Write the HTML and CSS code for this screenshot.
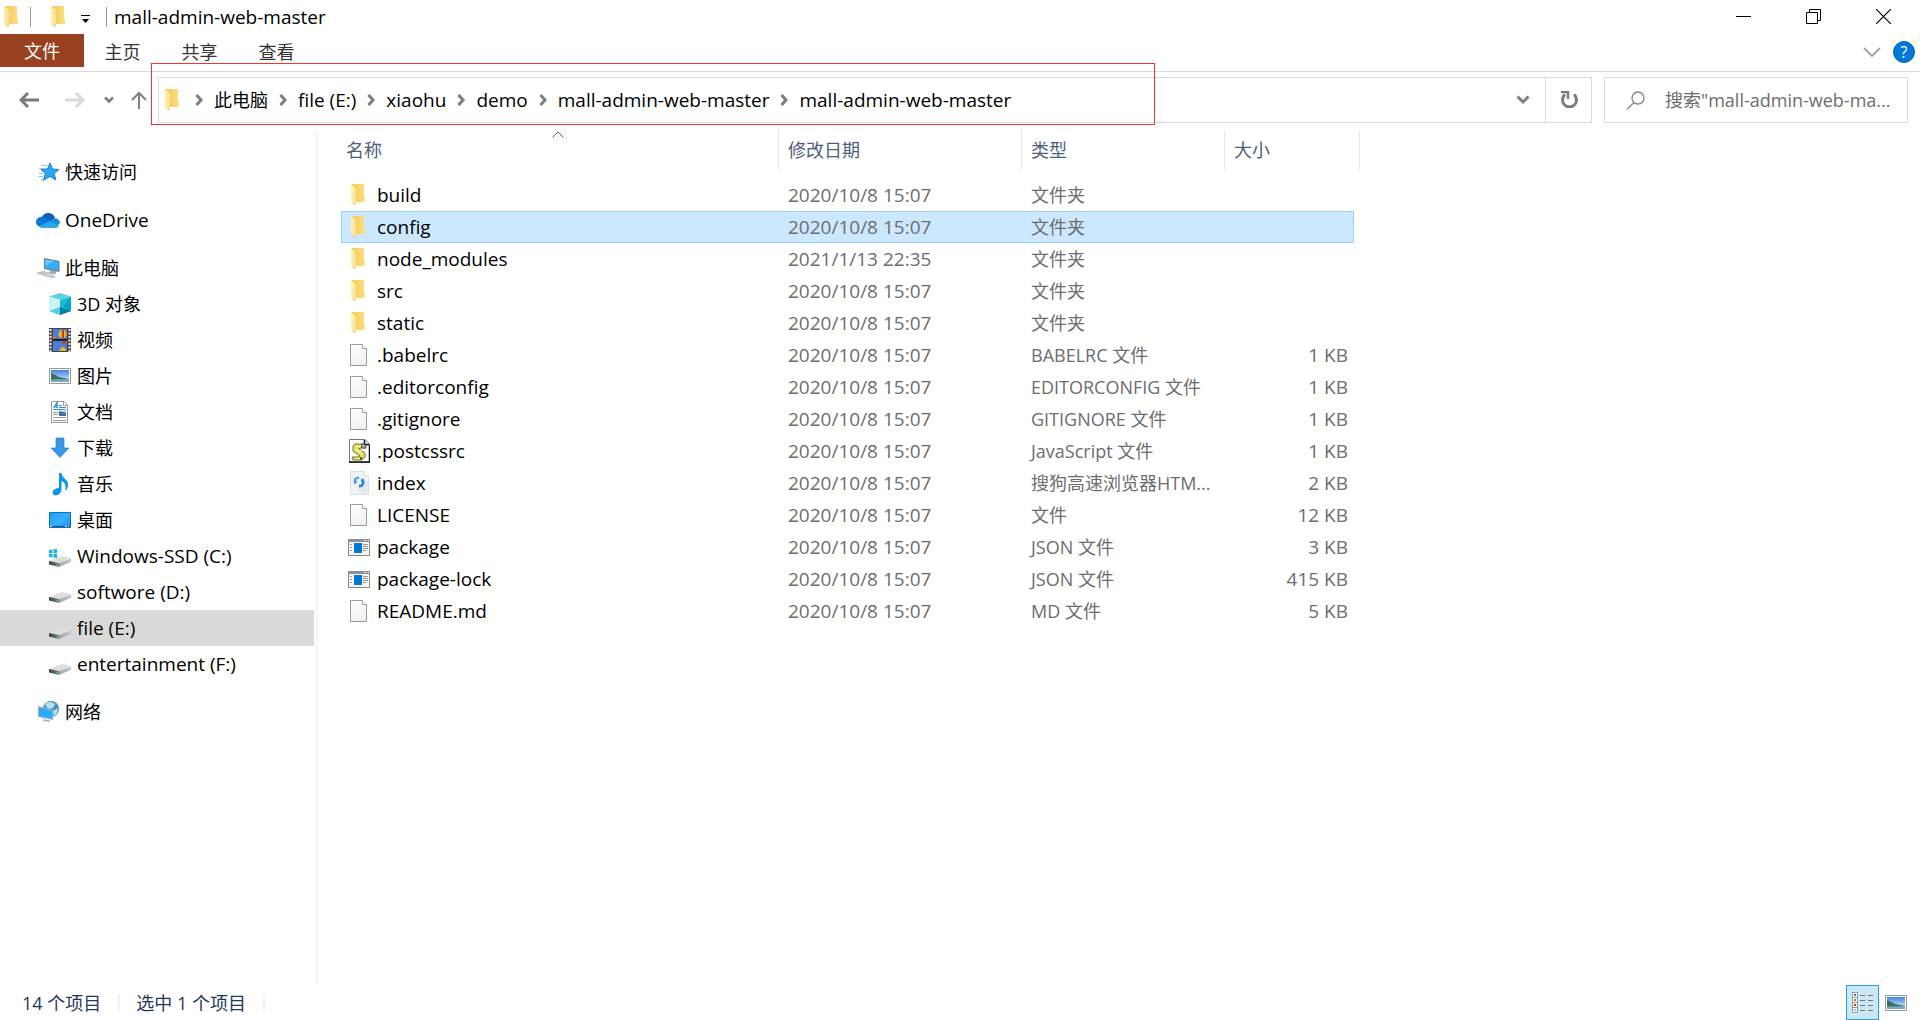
FILE: index.html
```html
<!DOCTYPE html>
<html lang="zh-CN">
<head>
<meta charset="utf-8">
<meta name="viewport" content="width=device-width, initial-scale=1">
<title>mall-admin-web-master</title>
<link rel="stylesheet" href="styles.css">
</head>
<body>
<svg class="sprite" width="0" height="0" aria-hidden="true">
  <defs>
    <linearGradient id="g-fold" x1="0" x2="1"><stop offset="0" stop-color="#efc65c"/><stop offset="1" stop-color="#ffdf80"/></linearGradient>
    <linearGradient id="g-flap" x1="0" x2="1"><stop offset="0" stop-color="#fff0b5"/><stop offset="1" stop-color="#fbdf8c"/></linearGradient>
    <linearGradient id="g-sky" x1="0" y1="0" x2="0" y2="1"><stop offset="0" stop-color="#3f86dc"/><stop offset="1" stop-color="#e4f3fb"/></linearGradient>
    <linearGradient id="g-screen" x1="0" y1="0" x2="1" y2="1"><stop offset="0" stop-color="#1b9cf4"/><stop offset="0.5" stop-color="#36b0ff"/><stop offset="1" stop-color="#1697f5"/></linearGradient>
    <linearGradient id="g-paper" x1="0" y1="0" x2="1" y2="1"><stop offset="0" stop-color="#ffffff"/><stop offset="1" stop-color="#eceef0"/></linearGradient>
    <linearGradient id="g-drive" x1="0" x2="1"><stop offset="0" stop-color="#3c3f40"/><stop offset="0.4" stop-color="#777a7b"/><stop offset="0.5" stop-color="#a5a8aa"/><stop offset="1" stop-color="#c6c8ca"/></linearGradient>
  </defs>
  <symbol id="i-folder" viewBox="0 0 14 22">
    <path d="M1 0H13V12L14 13V18H5V21H3L0 18V1Z" fill="url(#g-fold)"/>
    <path d="M0 0 5 4V18L4 21 0 18Z" fill="url(#g-flap)"/>
  </symbol>
  <symbol id="i-file" viewBox="0 0 22 24">
    <path d="M2.500 1.500H14L18.500 6V22.500H2.500Z" fill="url(#g-paper)" stroke="#9a9a9a"/>
    <path d="M14.500 1.500V5.500H18.500" fill="#fff" stroke="#9a9a9a"/>
  </symbol>
  <symbol id="i-js" viewBox="0 0 22 24">
    <path d="M1.500 .5H17L21.500 5V23.500H1.500Z" fill="#fff" stroke="#777"/>
    <path d="M1 23H21.500V6M16.500 1V5.500H21" fill="none" stroke="#111" stroke-width="1.500"/>
    <path d="M7 5H15L18 9H12L11 10 17 14V18L14 21H5L4 18H11L12 17 5 12V7Z" fill="#e3df55" stroke="#77742e"/>
    <path d="M7 7.500H13M7 10 14 15M7 19.500H13M9 12H14" stroke="#fdfac0" fill="none"/>
    <path d="M14 4.500 18 6V9H13.500Z" fill="#aaa" stroke="#333" stroke-width=".7"/>
    <path d="M13 18V20.500" stroke="#222" stroke-width="1.500"/>
  </symbol>
  <symbol id="i-sogou" viewBox="0 0 22 24">
    <path d="M2.500 .5H16L20.500 5V23.500H2.500Z" fill="#f1f4f7" stroke="#d8dfe6"/>
    <path d="M8 16 17 8 20 12V23H14Z" fill="#e4e9ee"/>
    <path d="M16 .5V5H20.500" fill="#fff" stroke="#d8dfe6"/>
    <path d="M11 7C7 7 6 10 8 12.500" fill="none" stroke="#4aa0f0" stroke-width="3"/>
    <path d="M11 15C15 15 16 12 14 8" fill="none" stroke="#2f86e0" stroke-width="3"/>
    <path d="M9 8 13 13" stroke="#fff" stroke-width="2"/>
  </symbol>
  <symbol id="i-json" viewBox="0 0 22 24">
    <path d="M.5 4.500H21.500V20.500H.5Z" fill="#f5f5f5" stroke="#8b8b8b"/>
    <path d="M0 4H22V7H0Z" fill="#8b9095"/>
    <path d="M16 5.500H17M18 5.500H19M20 5.500H21" stroke="#fff"/>
    <path d="M6 8H14V18H6Z" fill="#0078d7"/>
    <path d="M2 9.500H4M2 12.500H4M2 15.500H4M15 9.500H20M15 11.500H20M15 13.500H20M15 15.500H18" stroke="#999"/>
  </symbol>
  <symbol id="i-star" viewBox="0 0 24 24">
    <path d="M14 3 16.500 9 23 9.500 18 13.500 20 20 14 16.500 7 20.500 9.500 13.500 5 9.500 11.500 9Z" fill="#2aa7f5" stroke="#1583cf"/>
    <path d="M5 5.500H12M3 8.500H9M3 13.500H7M2 16.500H7M5 19.500H8" stroke="#8bcdf5"/>
  </symbol>
  <symbol id="i-cloud" viewBox="0 0 24 24">
    <path d="M6 9A7 7 0 0 1 19 10L12 15Z" fill="#0f5fb5"/>
    <path d="M5 19A5 5 0 0 1 5 9C8 8 10 9 12 11L18 14 8 19Z" fill="#0a78d4"/>
    <path d="M12 14 17 11C20 9 24 12 24 15L21 18Z" fill="#1590df"/>
    <path d="M3 18 13 13.500 23 17.500Q22 20 19 20H6Q4 20 3 18Z" fill="#28a8ea"/>
  </symbol>
  <symbol id="i-pc" viewBox="0 0 24 24">
    <path d="M8 2 23.500 5V16L8 13Z" fill="#6e7f8b"/>
    <path d="M9 3.500 22.500 6V14.500L9 12Z" fill="#35adff"/>
    <path d="M9 3.500 18 5 9 10Z" fill="#6ac5ff"/>
    <path d="M14 14 20 15V18L13 17Z" fill="#9caab4"/>
    <path d="M1 17 7 15.500 18 18 12 21Z" fill="#dfe4e8" stroke="#a3adb5" stroke-width=".7"/>
    <path d="M4 16.500 14 19.500M3 18 9 16M7 19 13 17" stroke="#a9b3ba" stroke-width=".7"/>
    <path d="M13 20.500 18 19.500 20 21 15 22.500Z" fill="#b8c1c8"/>
  </symbol>
  <symbol id="i-cube" viewBox="0 0 22 22">
    <path d="M0 3.500 11 0 22 3.500 11 7Z" fill="#5fd0e0"/>
    <path d="M0 3.500 11 7V22L0 18Z" fill="#c9f3f5"/>
    <path d="M0 18 11 14V22Z" fill="#55cfdd"/>
    <path d="M22 3.500 11 7V22L22 18Z" fill="#18bcd5"/>
    <path d="M11 14 22 18 11 22Z" fill="#08809c"/>
    <path d="M22 4 14 13 22 18Z" fill="#089fd1"/>
  </symbol>
  <symbol id="i-video" viewBox="0 0 22 24">
    <path d="M0 0H22V24H0Z" fill="#444"/>
    <path d="M1.500 1V24M20.500 1V24" stroke="#eee" stroke-width="2" stroke-dasharray="2 1.500"/>
    <path d="M4 1H18V11H4ZM4 13H18V23H4Z" fill="#4a7ed8"/>
    <circle cx="13.500" cy="6" r="4" fill="#e7b722"/><path d="M13 2H15V10H13Z" fill="#ca3520"/>
    <path d="M4 6 8 11H4Z" fill="#e45d76"/><path d="M7 9 10 11H6Z" fill="#3e9446"/>
    <circle cx="15" cy="14" r="2" fill="#b94225"/><path d="M11 21 14 18.500 17 21V23H10Z" fill="#e7b722"/><path d="M4 11H18V12.500H4Z" fill="#111"/>
  </symbol>
  <symbol id="i-pic" viewBox="0 0 22 24">
    <path d="M.5 4.500H21.500V19.500H.5Z" fill="#fff" stroke="#999"/>
    <path d="M2 6H20V18H2Z" fill="url(#g-sky)"/>
    <path d="M2 9Q7 11 10 13L20 15V16H2Z" fill="#3c6f59"/>
    <path d="M2 15.500 20 15V18H2Z" fill="#78a8bd"/>
  </symbol>
  <symbol id="i-doc" viewBox="0 0 22 24">
    <path d="M2.500 1.500H15L18.500 5V22.500H2.500Z" fill="#fff" stroke="#999"/>
    <path d="M14.500 1.500V5.500H18.500" fill="none" stroke="#999"/>
    <path d="M5 8 8 3V8M6 6.500H8" fill="none" stroke="#2c95dd" stroke-width="1.500"/>
    <path d="M10 5.500H13M10 7.500H17M4 9.500H17" stroke="#2c95dd"/>
    <path d="M4 12.500H9M4 14.500H9M4 17.500H17M4 20.500H17" stroke="#999"/>
    <path d="M10 11H17V16H10Z" fill="#3b759c"/><path d="M10 11H17V13Z" fill="#8cc4ee"/>
  </symbol>
  <symbol id="i-down" viewBox="0 0 22 24">
    <path d="M7 2H15V12H20L11 21.500 2 12H7Z" fill="#3a95e4" stroke="#2c83d0" stroke-width=".7"/>
  </symbol>
  <symbol id="i-music" viewBox="0 0 22 24">
    <path d="M10 1H12.500C13 7 20 7 19 14 18.500 17 17 18 16 19 18 13 15 10 12.500 9V18C12 22 8 24 5 23 2 21 4 16 10 16Z" fill="#0a98ee"/>
  </symbol>
  <symbol id="i-desk" viewBox="0 0 22 24">
    <path d="M.5 4.500H21.500V19.500H.5Z" fill="url(#g-screen)" stroke="#086fb8"/>
    <path d="M1 18.500H21" stroke="#064f85"/><path d="M1 18.500H3M16 18.500H18M19 18.500H20" stroke="#fff"/>
  </symbol>
  <symbol id="i-drive" viewBox="0 0 22 24">
    <path d="M0 17 13 12 22 14 10 19Z" fill="#dcdee0"/>
    <path d="M0 17 10 19 22 14.500V18L10 23 0 20.500Z" fill="url(#g-drive)"/>
    <path d="M7 20 9 20.500V22L7 21.500Z" fill="#38c840"/>
  </symbol>
  <symbol id="i-windrive" viewBox="0 0 22 24">
    <use href="#i-drive"/>
    <path d="M0 6 3.500 5.500V9H0ZM4.500 5.300 8 5V9H4.500ZM0 10H3.500V13.500L0 13ZM4.500 10H8V14L4.500 13.600Z" fill="#10b4f0"/>
  </symbol>
  <symbol id="i-net" viewBox="0 0 24 24">
    <circle cx="15" cy="9" r="8" fill="#4a91b8"/>
    <path d="M9 4Q14 0 19 4L17 8 12 9ZM17 11 22 8 21 13 18 16Z" fill="#b5deee"/>
    <path d="M2 6 17 9.500V20L2 17Z" fill="#91b5cc"/>
    <path d="M3 7.500 16 10.500V18.500L3 16Z" fill="#2da8fa"/>
    <path d="M7 19 14 20.500V22L7 21Z" fill="#a9b4bb"/>
  </symbol>
  <symbol id="i-crumb" viewBox="0 0 8 12"><path d="M1.500 1 6 6 1.500 11" fill="none" stroke="#7d7d7d" stroke-width="3"/></symbol>
  <symbol id="i-drop" viewBox="0 0 14 10"><path d="M1.500 1.500 7 7 12.500 1.500" fill="none" stroke="#808080" stroke-width="3"/></symbol>
</svg>

<div class="window">
  <header class="titlebar">
    <div class="quick">
      <svg class="folder"><use href="#i-folder"/></svg>
      <span class="rule"></span>
      <button class="plain quick-folder" aria-label="新建文件夹"><svg class="folder"><use href="#i-folder"/></svg></button>
      <button class="plain quick-more" aria-label="自定义快速访问工具栏"><svg width="9" height="9" viewBox="0 0 9 9"><path d="M0 0H9V1H0ZM1 4H8L4.500 8Z" fill="#000"/></svg></button>
      <span class="rule"></span>
    </div>
    <h1 class="title">mall-admin-web-master</h1>
    <div class="controls">
      <button class="plain control" aria-label="最小化"><svg width="15" height="15"><path d="M0 7H15V8H0Z"/></svg></button>
      <button class="plain control" aria-label="还原"><svg width="15" height="15"><path d="M.5 3.500H11.500V14.500H.5ZM3.500 3.500V.5H14.500V11.500H11.500" fill="none" stroke="#000"/></svg></button>
      <button class="plain control" aria-label="关闭"><svg width="15" height="15"><path d="M0 0 15 15M15 0 0 15" stroke="#000" stroke-width="1.200"/></svg></button>
    </div>
  </header>

  <div class="ribbon">
    <button class="plain tab tab-file">文件</button>
    <button class="plain tab">主页</button>
    <button class="plain tab">共享</button>
    <button class="plain tab">查看</button>
    <div class="ribbon-end">
      <button class="plain" aria-label="展开功能区"><svg width="18" height="10"><path d="M1 1 9 9 17 1" fill="none" stroke="#a6a6a6" stroke-width="2"/></svg></button>
      <button class="plain help" aria-label="帮助">?</button>
    </div>
  </div>

  <div class="navbar">
    <div class="history">
      <button class="plain" aria-label="后退"><svg width="20" height="16"><path d="M20 8H2M9 1 2 8 9 15" fill="none" stroke="#7a7a7a" stroke-width="3"/></svg></button>
      <button class="plain forward" aria-label="前进"><svg width="20" height="16"><path d="M0 8H18M11 1 18 8 11 15" fill="none" stroke="#dadada" stroke-width="3"/></svg></button>
      <button class="plain recent" aria-label="最近浏览的位置"><svg width="10" height="8"><path d="M1 1.500 5 5.500 9 1.500" fill="none" stroke="#7a7a7a" stroke-width="2.500"/></svg></button>
      <button class="plain" aria-label="向上"><svg width="16" height="18"><path d="M8 18V2M1 9 8 2 15 9" fill="none" stroke="#808080" stroke-width="2"/></svg></button>
    </div>
    <div class="address">
      <nav class="crumbs" aria-label="地址">
        <svg class="folder"><use href="#i-folder"/></svg>
        <svg class="sep"><use href="#i-crumb"/></svg><a class="cjk" href="#">此电脑</a>
        <svg class="sep"><use href="#i-crumb"/></svg><a href="#">file (E:)</a>
        <svg class="sep"><use href="#i-crumb"/></svg><a href="#">xiaohu</a>
        <svg class="sep"><use href="#i-crumb"/></svg><a href="#">demo</a>
        <svg class="sep"><use href="#i-crumb"/></svg><a href="#">mall-admin-web-master</a>
        <svg class="sep"><use href="#i-crumb"/></svg><a href="#">mall-admin-web-master</a>
      </nav>
      <button class="plain drop" aria-label="以前的位置"><svg width="14" height="10"><use href="#i-drop"/></svg></button>
      <button class="plain refresh" aria-label="刷新"><svg width="18" height="18"><path d="M5 3.500A7 7 0 1 0 14 3.500" fill="none" stroke="#7d7d7d" stroke-width="3"/><path d="M1 1H8V8" fill="none" stroke="#7d7d7d" stroke-width="2.500"/></svg></button>
      <div class="highlight"></div>
    </div>
    <label class="search">
      <svg width="19" height="19"><circle cx="12" cy="7" r="6" fill="none" stroke="#858585" stroke-width="1.300"/><path d="M8 11.500 1 18.500" stroke="#858585" stroke-width="1.300"/></svg>
      <input type="text" aria-label="搜索" placeholder="搜索&quot;mall-admin-web-ma...">
    </label>
  </div>

  <div class="body">
    <nav class="tree" aria-label="导航窗格">
      <a class="node" href="#"><svg><use href="#i-star"/></svg>快速访问</a>
      <a class="node" href="#"><svg><use href="#i-cloud"/></svg><span class="latin">OneDrive</span></a>
      <div class="group">
        <a class="node" href="#"><svg><use href="#i-pc"/></svg>此电脑</a>
        <a class="node child" href="#"><svg><use href="#i-cube"/></svg>3D 对象</a>
        <a class="node child" href="#"><svg><use href="#i-video"/></svg>视频</a>
        <a class="node child" href="#"><svg><use href="#i-pic"/></svg>图片</a>
        <a class="node child" href="#"><svg><use href="#i-doc"/></svg>文档</a>
        <a class="node child" href="#"><svg><use href="#i-down"/></svg>下载</a>
        <a class="node child" href="#"><svg><use href="#i-music"/></svg>音乐</a>
        <a class="node child" href="#"><svg><use href="#i-desk"/></svg>桌面</a>
        <a class="node child" href="#"><svg><use href="#i-windrive"/></svg><span class="latin">Windows-SSD (C:)</span></a>
        <a class="node child" href="#"><svg><use href="#i-drive"/></svg><span class="latin">softwore (D:)</span></a>
        <a class="node child current" href="#"><svg><use href="#i-drive"/></svg><span class="latin">file (E:)</span></a>
        <a class="node child" href="#"><svg><use href="#i-drive"/></svg><span class="latin">entertainment (F:)</span></a>
      </div>
      <a class="node" href="#"><svg><use href="#i-net"/></svg>网络</a>
    </nav>

    <main class="files">
      <table>
        <colgroup><col class="c-name"><col class="c-date"><col class="c-type"><col class="c-size"><col class="c-edge"></colgroup>
        <thead>
          <tr>
            <th aria-sort="ascending"><button class="plain head">名称<svg class="sort" width="12" height="7"><path d="M.5 6.500 6 1 11.500 6.500" fill="none" stroke="#666"/></svg></button></th>
            <th><button class="plain head">修改日期</button></th>
            <th><button class="plain head">类型</button></th>
            <th colspan="2"><button class="plain head">大小</button></th>
          </tr>
        </thead>
        <tbody>
          <tr><td><div class="name"><svg class="folder"><use href="#i-folder"/></svg>build</div></td><td class="date">2020/10/8 15:07</td><td>文件夹</td><td></td></tr>
          <tr class="selected"><td><div class="name"><svg class="folder"><use href="#i-folder"/></svg>config</div></td><td class="date">2020/10/8 15:07</td><td>文件夹</td><td></td></tr>
          <tr><td><div class="name"><svg class="folder"><use href="#i-folder"/></svg>node_modules</div></td><td class="date">2021/1/13 22:35</td><td>文件夹</td><td></td></tr>
          <tr><td><div class="name"><svg class="folder"><use href="#i-folder"/></svg>src</div></td><td class="date">2020/10/8 15:07</td><td>文件夹</td><td></td></tr>
          <tr><td><div class="name"><svg class="folder"><use href="#i-folder"/></svg>static</div></td><td class="date">2020/10/8 15:07</td><td>文件夹</td><td></td></tr>
          <tr><td><div class="name"><svg><use href="#i-file"/></svg>.babelrc</div></td><td class="date">2020/10/8 15:07</td><td>BABELRC 文件</td><td class="size">1 KB</td></tr>
          <tr><td><div class="name"><svg><use href="#i-file"/></svg>.editorconfig</div></td><td class="date">2020/10/8 15:07</td><td>EDITORCONFIG 文件</td><td class="size">1 KB</td></tr>
          <tr><td><div class="name"><svg><use href="#i-file"/></svg>.gitignore</div></td><td class="date">2020/10/8 15:07</td><td>GITIGNORE 文件</td><td class="size">1 KB</td></tr>
          <tr><td><div class="name"><svg><use href="#i-js"/></svg>.postcssrc</div></td><td class="date">2020/10/8 15:07</td><td>JavaScript 文件</td><td class="size">1 KB</td></tr>
          <tr><td><div class="name"><svg><use href="#i-sogou"/></svg>index</div></td><td class="date">2020/10/8 15:07</td><td>搜狗高速浏览器HTM...</td><td class="size">2 KB</td></tr>
          <tr><td><div class="name"><svg><use href="#i-file"/></svg>LICENSE</div></td><td class="date">2020/10/8 15:07</td><td>文件</td><td class="size">12 KB</td></tr>
          <tr><td><div class="name"><svg><use href="#i-json"/></svg>package</div></td><td class="date">2020/10/8 15:07</td><td>JSON 文件</td><td class="size">3 KB</td></tr>
          <tr><td><div class="name"><svg><use href="#i-json"/></svg>package-lock</div></td><td class="date">2020/10/8 15:07</td><td>JSON 文件</td><td class="size">415 KB</td></tr>
          <tr><td><div class="name"><svg><use href="#i-file"/></svg>README.md</div></td><td class="date">2020/10/8 15:07</td><td>MD 文件</td><td class="size">5 KB</td></tr>
        </tbody>
      </table>
    </main>
  </div>

  <footer class="status">
    <span class="count">14 个项目</span>
    <span class="count">选中 1 个项目</span>
    <div class="views">
      <button class="plain view active" aria-label="详细信息"><svg width="22" height="22">
        <path d="M.5 .5H5.500V20.500H.5ZM.5 5.500H5.500M.5 10.500H5.500M.5 15.500H5.500" fill="#fff" stroke="#999"/>
        <path d="M2 2H4V4H2Z" fill="#3b7d99"/><path d="M2 7H4V9H2Z" fill="#8d8a1e"/><path d="M2 12H4V14H2Z" fill="#c43018"/><path d="M2 17H4V19H2Z" fill="#a8bcc4"/>
        <path d="M8 3.500H13M16 3.500H21M8 8.500H13M16 8.500H21M8 13.500H13M16 13.500H21M8 18.500H13M16 18.500H21" stroke="#777"/></svg></button>
      <button class="plain view" aria-label="大缩略图"><svg width="22" height="24"><use href="#i-pic"/></svg></button>
    </div>
  </footer>
</div>
</body>
</html>
```
FILE: styles.css
```css
* {
  box-sizing: border-box;
}

body {
  margin: 0;
  background: #fff;
  color: #000;
  font-family: "Open Sans", "Noto Sans CJK SC", sans-serif;
  font-size: 18px;
  line-height: 24px;
}

a {
  color: inherit;
  text-decoration: none;
}

svg {
  display: block;
  flex: none;
}

.sprite {
  position: absolute;
}

.plain {
  display: flex;
  align-items: center;
  justify-content: center;
  padding: 0;
  border: 0;
  background: none;
  color: inherit;
  font: inherit;
}

.folder {
  width: 14px;
  height: 22px;
}

.window {
  display: flex;
  flex-direction: column;
  min-height: 100vh;
}

/* Title bar */
.titlebar {
  display: flex;
  align-items: center;
  height: 34px;
  padding-left: 4px;
}

.quick {
  display: flex;
  align-items: center;
}

.rule {
  width: 1px;
  height: 20px;
  background: #999;
}

.quick .rule {
  margin-left: 12px;
}

.quick-folder {
  margin-left: 20px;
}

.quick-more {
  margin: 4px 4px 0 16px;
}

.title {
  margin: 0 0 0 7px;
  font-size: 19px;
  font-weight: 400;
}

.controls {
  display: flex;
  margin-left: auto;
  padding-right: 2px;
}

.control {
  width: 70px;
  height: 34px;
  padding-bottom: 2px;
}

/* Ribbon tabs */
.ribbon {
  display: flex;
  height: 38px;
  padding-bottom: 4px;
  border-bottom: 1px solid #d9d9d9;
  color: #333;
}

.tab {
  width: 77px;
  padding-top: 2px;
}

.tab-file {
  width: 84px;
  padding-top: 0;
  background: #99401f;
  color: #fff;
}

.ribbon-end {
  display: flex;
  align-items: center;
  gap: 12px;
  margin-left: auto;
  padding: 2px 5px 0 0;
}

.help {
  width: 22px;
  height: 22px;
  border: 1px solid #0860ac;
  border-radius: 50%;
  background: #0078d7;
  color: #fff;
  font-size: 16px;
  line-height: 20px;
}

/* Navigation bar */
.navbar {
  display: flex;
  align-items: center;
  height: 58px;
  padding: 5px 12px 7px 19px;
}

.history {
  display: flex;
  align-items: center;
  width: 139px;
}

.forward {
  margin-left: 26px;
}

.recent {
  margin: 0 17px 0 19px;
}

.address {
  position: relative;
  display: flex;
  flex: 1;
  height: 46px;
  border: 1px solid #d9d9d9;
}

.crumbs {
  display: flex;
  flex: 1;
  align-items: center;
  padding-left: 6px;
  font-size: 19px;
}

.cjk {
  font-size: 18px;
}

.sep {
  width: 8px;
  height: 12px;
  margin: 0 11px;
}

.folder + .sep {
  margin-left: 16px;
}

.drop {
  width: 44px;
}

.refresh {
  width: 46px;
  border-left: 1px solid #d9d9d9;
}

/* Marker frame drawn over the path */
.highlight {
  position: absolute;
  top: -15px;
  left: -8px;
  width: 1004px;
  height: 62px;
  border: 1px solid #f03535;
  pointer-events: none;
}

.search {
  display: flex;
  align-items: center;
  gap: 20px;
  width: 304px;
  height: 46px;
  margin-left: 12px;
  padding-left: 21px;
  border: 1px solid #d9d9d9;
}

.search input {
  flex: 1;
  min-width: 0;
  padding: 0;
  border: 0;
  outline: 0;
  background: none;
  font: inherit;
}

.search input::placeholder {
  color: #6d6d6d;
}

/* Body */
.body {
  display: flex;
  flex: 1;
}

.tree {
  display: flex;
  flex-direction: column;
  gap: 12px;
  width: 318px;
  padding: 24px 2px 0 0;
  border-right: 2px solid #f5f5f5;
}

.node {
  display: flex;
  align-items: center;
  gap: 5px;
  height: 36px;
  padding-left: 36px;
}

.node svg {
  width: 24px;
  height: 24px;
}

.child {
  padding-left: 49px;
}

.child svg {
  width: 22px;
}

.child.node {
  gap: 6px;
}

.latin {
  font-size: 19px;
}

.current {
  background: #d9d9d9;
}

/* File list */
.files {
  flex: 1;
  padding-left: 23px;
}

table {
  width: 1019px;
  border-collapse: separate;
  border-spacing: 0;
  table-layout: fixed;
  color: #6d6d6d;
}

.c-name { width: 438px; }
.c-date { width: 243px; }
.c-type { width: 203px; }
.c-size { width: 129px; }
.c-edge { width: 6px; }

th {
  padding: 0 0 9px;
  color: #4c607a;
  font-weight: 400;
}

.head {
  position: relative;
  justify-content: flex-start;
  width: 100%;
  height: 40px;
  padding-left: 9px;
  border-right: 1px solid #e5e5e5;
}

th:first-child .head {
  padding-left: 5px;
}

.sort {
  position: absolute;
  top: 1px;
  left: 50%;
  margin-left: -8px;
}

td {
  height: 32px;
  padding: 0 0 0 9px;
  white-space: nowrap;
}

td:first-child {
  padding-left: 7px;
}

.name {
  display: flex;
  align-items: center;
  gap: 7px;
  color: #000;
  font-size: 19px;
}

.name svg {
  width: 22px;
  height: 24px;
}

.name .folder {
  width: 14px;
  height: 22px;
  margin: 0 5px 0 3px;
}

.date,
td.size {
  font-size: 19px;
}

td.size {
  padding: 0 6px 0 0;
  text-align: right;
}

.selected td {
  border: solid #99d1ff;
  border-width: 1px 0;
  background: #cce8ff;
}

.selected td:first-child {
  padding-left: 6px;
  border-left-width: 1px;
}

.selected td:last-child {
  border-right-width: 1px;
}

/* Status bar */
.status {
  display: flex;
  align-items: center;
  height: 35px;
  padding: 0 8px 0 22px;
  color: #1e395b;
}

.count {
  margin-right: 16px;
  padding-right: 17px;
  border-right: 2px solid #f2f2f2;
  line-height: 18px;
}

.views {
  display: flex;
  margin-left: auto;
}

.view {
  width: 33px;
  height: 35px;
}

.active {
  border: 1px solid #26a0da;
  background: #cbe8f6;
}
```
